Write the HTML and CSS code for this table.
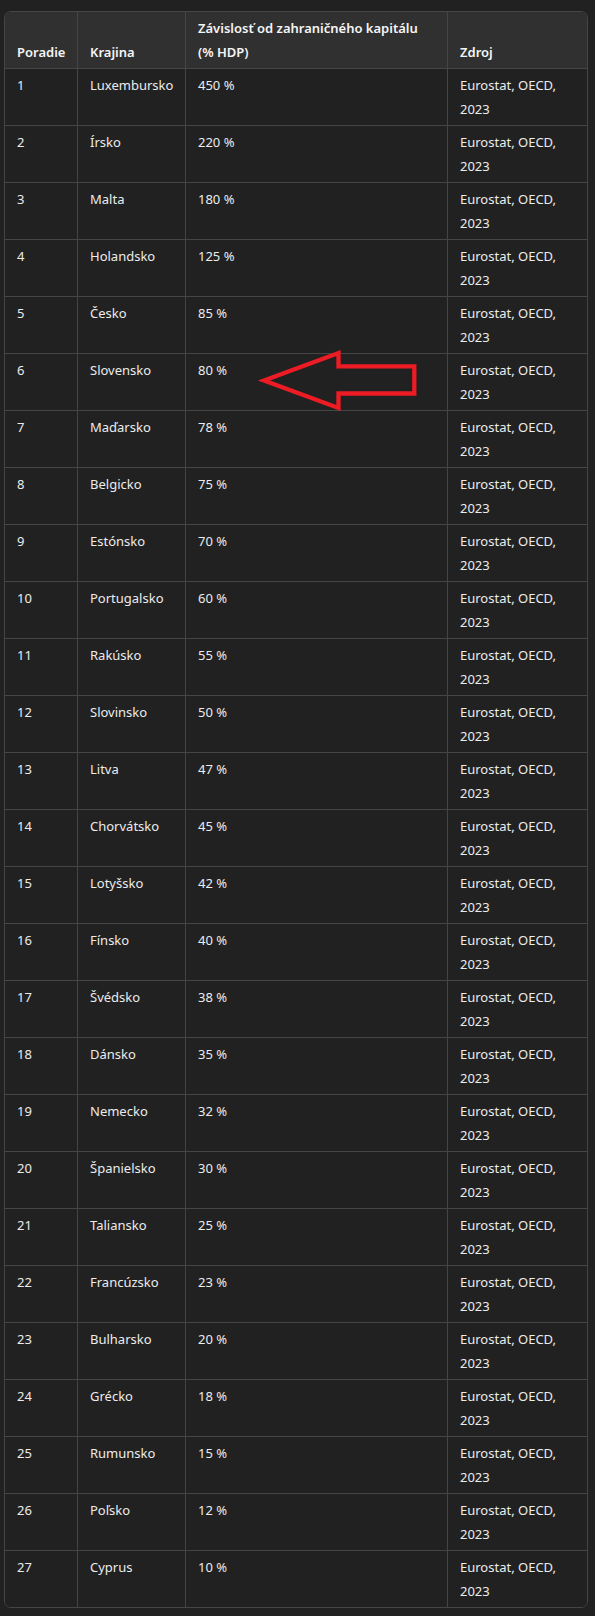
FILE: index.html
```html
<!DOCTYPE html>
<html lang="sk">
<head>
<meta charset="utf-8">
<link rel="stylesheet" href="styles.css">
</head>
<body>
<div class="page">
  <div class="table-wrap">
    <table class="data">
      <colgroup>
        <col class="c1"><col class="c2"><col class="c3"><col class="c4">
      </colgroup>
      <thead>
        <tr><th>Poradie</th><th>Krajina</th><th>Závislosť od zahraničného kapitálu (% HDP)</th><th>Zdroj</th></tr>
      </thead>
      <tbody>
        <tr><td>1</td><td>Luxembursko</td><td>450 %</td><td>Eurostat, OECD, 2023</td></tr>
        <tr><td>2</td><td>Írsko</td><td>220 %</td><td>Eurostat, OECD, 2023</td></tr>
        <tr><td>3</td><td>Malta</td><td>180 %</td><td>Eurostat, OECD, 2023</td></tr>
        <tr><td>4</td><td>Holandsko</td><td>125 %</td><td>Eurostat, OECD, 2023</td></tr>
        <tr><td>5</td><td>Česko</td><td>85 %</td><td>Eurostat, OECD, 2023</td></tr>
        <tr><td>6</td><td>Slovensko</td><td>80 %</td><td>Eurostat, OECD, 2023</td></tr>
        <tr><td>7</td><td>Maďarsko</td><td>78 %</td><td>Eurostat, OECD, 2023</td></tr>
        <tr><td>8</td><td>Belgicko</td><td>75 %</td><td>Eurostat, OECD, 2023</td></tr>
        <tr><td>9</td><td>Estónsko</td><td>70 %</td><td>Eurostat, OECD, 2023</td></tr>
        <tr><td>10</td><td>Portugalsko</td><td>60 %</td><td>Eurostat, OECD, 2023</td></tr>
        <tr><td>11</td><td>Rakúsko</td><td>55 %</td><td>Eurostat, OECD, 2023</td></tr>
        <tr><td>12</td><td>Slovinsko</td><td>50 %</td><td>Eurostat, OECD, 2023</td></tr>
        <tr><td>13</td><td>Litva</td><td>47 %</td><td>Eurostat, OECD, 2023</td></tr>
        <tr><td>14</td><td>Chorvátsko</td><td>45 %</td><td>Eurostat, OECD, 2023</td></tr>
        <tr><td>15</td><td>Lotyšsko</td><td>42 %</td><td>Eurostat, OECD, 2023</td></tr>
        <tr><td>16</td><td>Fínsko</td><td>40 %</td><td>Eurostat, OECD, 2023</td></tr>
        <tr><td>17</td><td>Švédsko</td><td>38 %</td><td>Eurostat, OECD, 2023</td></tr>
        <tr><td>18</td><td>Dánsko</td><td>35 %</td><td>Eurostat, OECD, 2023</td></tr>
        <tr><td>19</td><td>Nemecko</td><td>32 %</td><td>Eurostat, OECD, 2023</td></tr>
        <tr><td>20</td><td>Španielsko</td><td>30 %</td><td>Eurostat, OECD, 2023</td></tr>
        <tr><td>21</td><td>Taliansko</td><td>25 %</td><td>Eurostat, OECD, 2023</td></tr>
        <tr><td>22</td><td>Francúzsko</td><td>23 %</td><td>Eurostat, OECD, 2023</td></tr>
        <tr><td>23</td><td>Bulharsko</td><td>20 %</td><td>Eurostat, OECD, 2023</td></tr>
        <tr><td>24</td><td>Grécko</td><td>18 %</td><td>Eurostat, OECD, 2023</td></tr>
        <tr><td>25</td><td>Rumunsko</td><td>15 %</td><td>Eurostat, OECD, 2023</td></tr>
        <tr><td>26</td><td>Poľsko</td><td>12 %</td><td>Eurostat, OECD, 2023</td></tr>
        <tr><td>27</td><td>Cyprus</td><td>10 %</td><td>Eurostat, OECD, 2023</td></tr>
      </tbody>
    </table>
  </div>
  <svg class="arrow" width="170" height="70" viewBox="250 345 170 70" aria-hidden="true">
    <polygon points="264,380.5 338.5,353 338.5,366.3 414.3,366.3 414.3,393.5 338.5,393.5 338.5,408" fill="none" stroke="#ed1c24" stroke-width="4.3" stroke-linejoin="miter" stroke-miterlimit="3"/>
  </svg>
</div>
</body>
</html>
```

FILE: styles.css
```css
html, body {
  margin: 0;
  padding: 0;
  background: #212121;
}

.page {
  position: relative;
  padding: 11px 0 8px 4px;
  font-family: "Noto Sans", "Open Sans", "Liberation Sans", sans-serif;
  font-size: 13px;
  line-height: 23.5px;
  color: #ececec;
}

.table-wrap {
  width: 582px;
  border: 1px solid #454545;
  border-radius: 7px;
  overflow: hidden;
}

.data {
  width: 582px;
  table-layout: fixed;
  border-collapse: separate;
  border-spacing: 0;
}

.c1 { width: 73px; }
.c2 { width: 108px; }
.c3 { width: 262px; }
.c4 { width: 139px; }

.data th,
.data td {
  padding: 5px 12px 4px 12px;
  border-right: 1px solid #454545;
  border-bottom: 1px solid #454545;
  text-align: left;
}

.data th:last-child,
.data td:last-child {
  border-right: none;
}

.data tbody tr:last-child td {
  border-bottom: none;
}

.data th {
  background: #303030;
  color: #f5f5f5;
  font-weight: 600;
  vertical-align: bottom;
}

.data td {
  background: #212121;
  vertical-align: top;
}

.arrow {
  position: absolute;
  left: 250px;
  top: 345px;
}
```
